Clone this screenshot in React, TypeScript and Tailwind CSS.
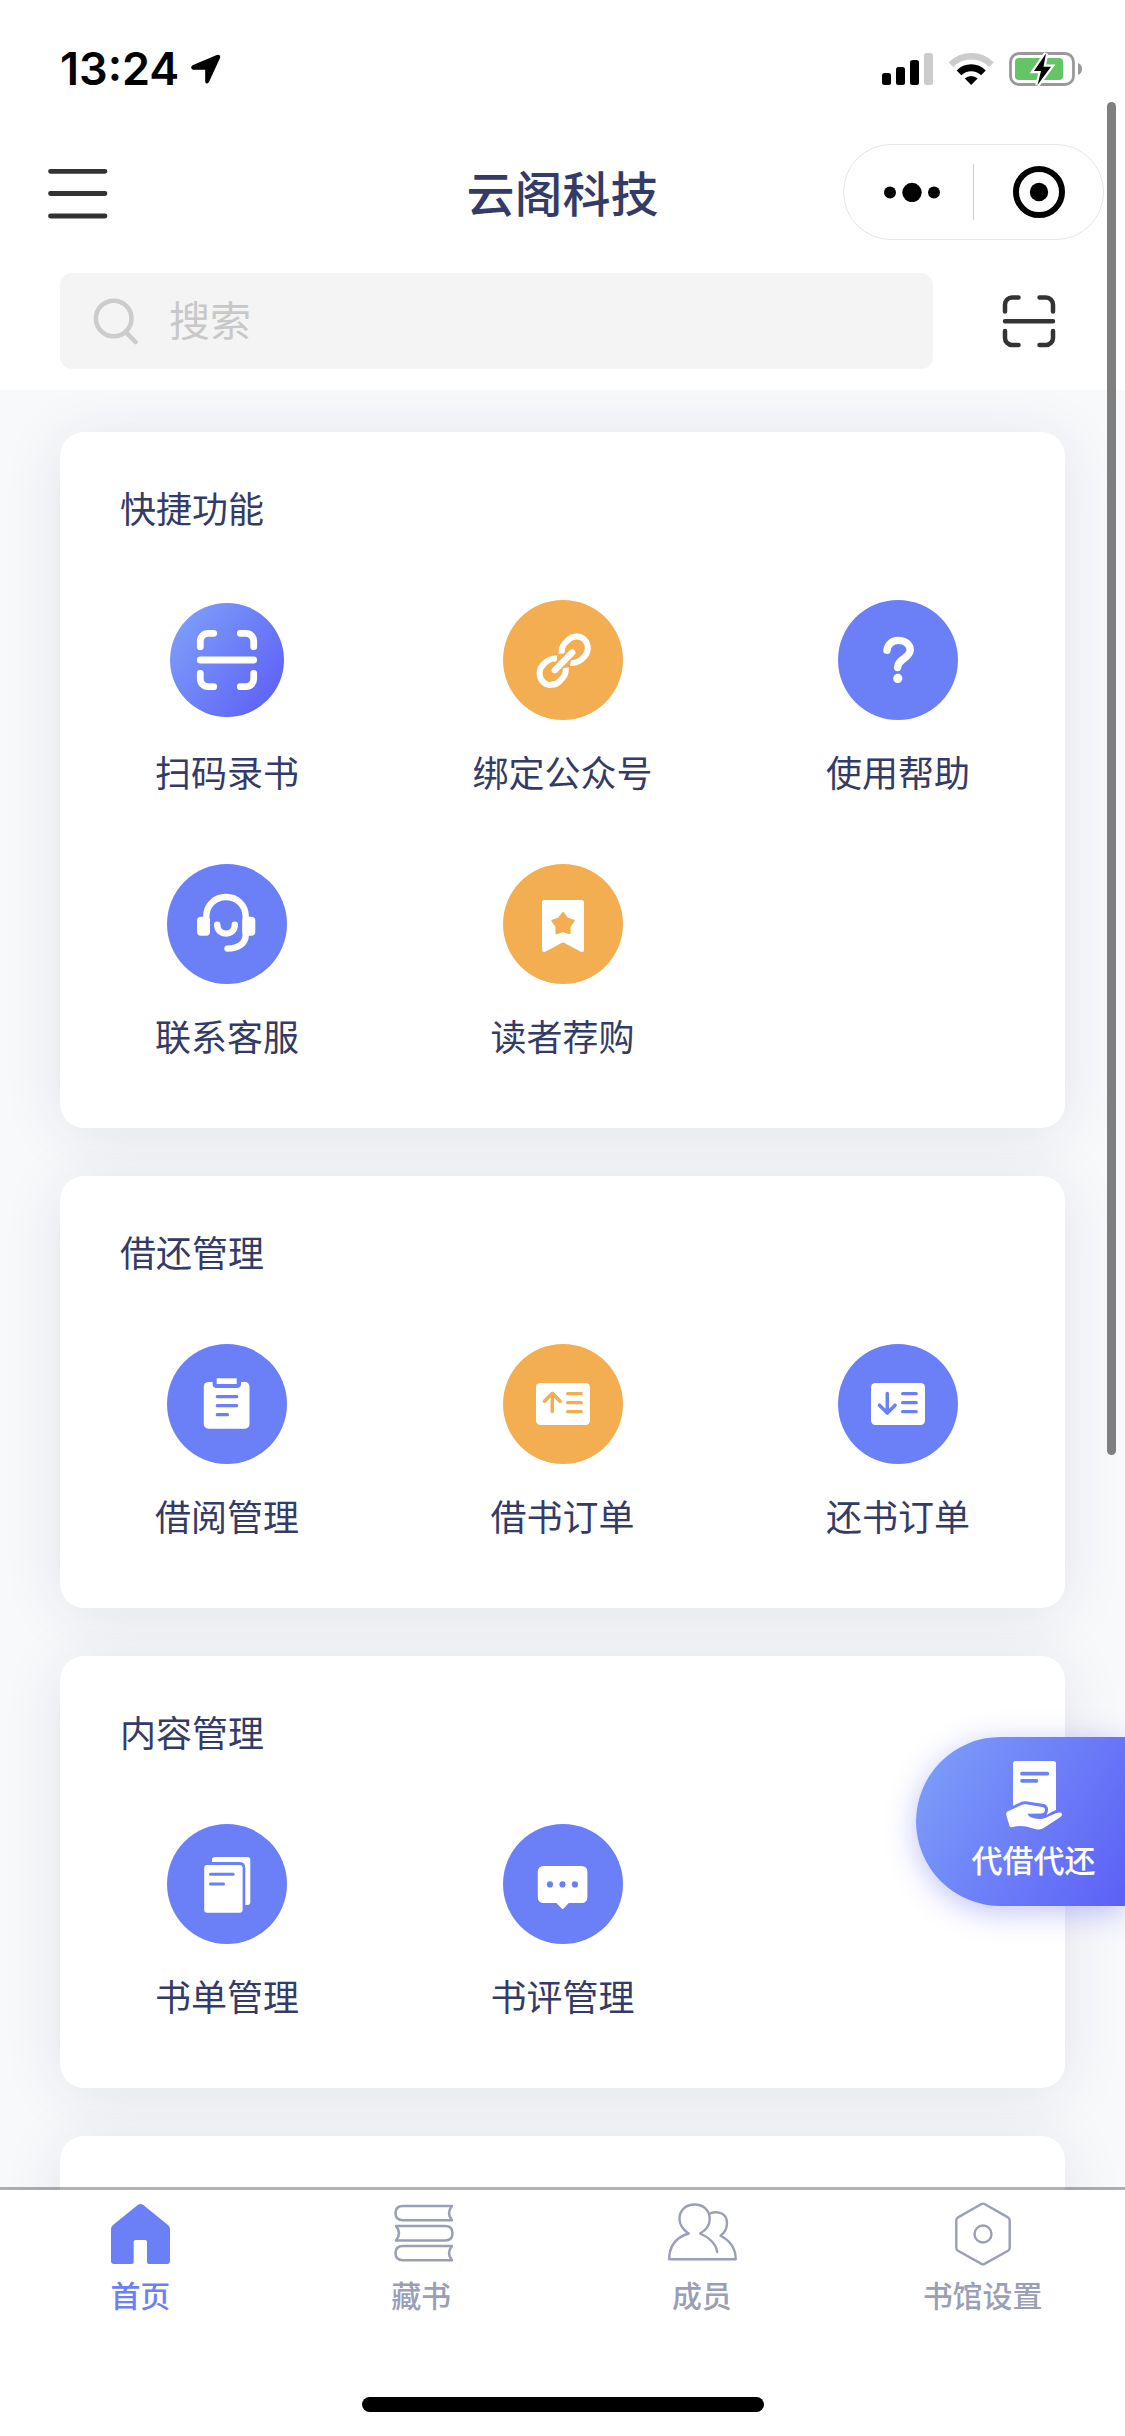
import type { ReactNode } from 'react';

const BLUE = '#6b80f7';
const ORANGE = '#f2ae50';

type Entry = { label: string; icon: ReactNode };
type Section = { title: string; items: Entry[] };

function Badge({ fill, children }: { fill: string; children: ReactNode }) {
  return (
    <svg className="size-[120px]" viewBox="0 0 120 120" fill="none">
      <circle cx="60" cy="60" r="60" fill={fill} />
      {children}
    </svg>
  );
}

function ScanBadge() {
  return (
    <svg className="size-[120px]" viewBox="0 0 120 120" fill="none">
      <defs>
        <linearGradient id="scan" x1="0.1" y1="0.2" x2="0.9" y2="0.8">
          <stop offset="0" stopColor="#7b9af9" />
          <stop offset="1" stopColor="#6065f7" />
        </linearGradient>
      </defs>
      <circle cx="60" cy="60" r="57" fill="url(#scan)" />
      <path
        d="M33.3 46.7V41a7.7 7.7 0 0 1 7.7-7.7h5.7M73.3 33.3H79a7.7 7.7 0 0 1 7.7 7.7v5.7M86.7 73.3V79a7.7 7.7 0 0 1-7.7 7.7h-5.7M46.7 86.7H41a7.7 7.7 0 0 1-7.7-7.7v-5.7M33.3 60h53.4"
        stroke="#fff"
        strokeWidth="6.8"
        strokeLinecap="round"
      />
    </svg>
  );
}

function LinkBadge() {
  const ring = 'M58.6 53.6C58 47.5 60.5 44.5 64 41C69 35.4 77 35.2 81.4 39.6C86 44.2 86 52 81 57C77.5 60.8 74 63.8 67.5 62.8';
  return (
    <Badge fill={ORANGE}>
      <g stroke="#fff" strokeWidth="6">
        <path d={ring} />
        <path d={ring} transform="rotate(180 60.7 60.7)" />
      </g>
      <path d="M51.8 70.2L69.2 52.6" stroke={ORANGE} strokeWidth="10" />
      <path d="M51.8 70.2L69.2 52.6" stroke="#fff" strokeWidth="6.4" strokeLinecap="round" />
    </Badge>
  );
}

function HelpBadge() {
  return (
    <Badge fill={BLUE}>
      <path
        d="M49 50.2C50 43.6 54.6 40.4 60.5 40.4C67 40.4 72.2 44.4 72.2 50C72.2 58 59.6 59 59.6 67.5"
        stroke="#fff"
        strokeWidth="7.4"
        strokeLinecap="round"
      />
      <circle cx="59.8" cy="78.4" r="4.6" fill="#fff" />
    </Badge>
  );
}

function ServiceBadge() {
  return (
    <Badge fill={BLUE}>
      <rect x="30" y="52.7" width="13" height="19" rx="4" fill="#fff" />
      <rect x="75.3" y="52.7" width="13" height="19" rx="4" fill="#fff" />
      <path
        d="M39.3 56V52.5C39.3 41 48 33 59 33C70 33 78.7 41 78.7 52.5V71C78.7 79 72 84.6 60.5 84.6"
        stroke="#fff"
        strokeWidth="6.4"
        strokeLinecap="round"
      />
      <path d="M50.2 60.8C50.2 72.6 67.8 72.6 67.8 60.8" stroke="#fff" strokeWidth="6.4" strokeLinecap="round" />
    </Badge>
  );
}

function BookmarkBadge() {
  return (
    <Badge fill={ORANGE}>
      <path d="M41.5 36h37a2.5 2.5 0 0 1 2.5 2.5v47.2q0 3-3.2 2L60 78.3L42.2 87.7q-3.2 1-3.2-2V38.5A2.5 2.5 0 0 1 41.5 36Z" fill="#fff" />
      <path
        d="M60 48.8L64 54.4L70.8 56.6L66.6 62.4V69.2L60 67L53.4 69.2V62.4L49.2 56.6L56 54.4Z"
        fill={ORANGE}
        stroke={ORANGE}
        strokeWidth="2"
        strokeLinejoin="round"
      />
    </Badge>
  );
}

function ClipboardBadge() {
  return (
    <Badge fill={BLUE}>
      <path
        d="M41 38h4.6v2a4 4 0 0 0 4 4H70a4 4 0 0 0 4-4v-2h4a4.5 4.5 0 0 1 4.5 4.5V80a4.5 4.5 0 0 1-4.5 4.7H41.3A4.5 4.5 0 0 1 36.8 80V42.5A4.5 4.5 0 0 1 41 38Z"
        fill="#fff"
      />
      <path d="M49.7 34.3h20V40h-20z" fill="#fff" />
      <path d="M50.3 52.7h19.4M50.3 61.7h19.4M50.3 70.7h10.2" stroke={BLUE} strokeWidth="3.3" strokeLinecap="round" />
    </Badge>
  );
}

function OrderBadge({ fill, arrow }: { fill: string; arrow: string }) {
  return (
    <Badge fill={fill}>
      <rect x="33" y="39" width="54" height="42" rx="4.5" fill="#fff" />
      <path d={arrow} stroke={fill} strokeWidth="3.5" strokeLinecap="round" strokeLinejoin="round" />
      <path d="M64.6 49.7h13.7M64.6 58.7h13.7M64.6 67.7h13.7" stroke={fill} strokeWidth="3.2" strokeLinecap="round" />
    </Badge>
  );
}

function BookListBadge() {
  return (
    <Badge fill={BLUE}>
      <rect x="37.2" y="41" width="38.4" height="47.7" rx="3" fill="#fff" />
      <path d="M45 38v-2q0-3 3-3h32.5q2.8 0 2.8 3v42q0 3-2.8 3h-2.2V44q0-6-5.5-6z" fill="#fff" />
      <path d="M43.5 50.3h22.6M43.5 60h13" stroke={BLUE} strokeWidth="3.1" strokeLinecap="round" />
    </Badge>
  );
}

function CommentBadge() {
  return (
    <Badge fill={BLUE}>
      <path
        d="M40.3 42h38.6a5.5 5.5 0 0 1 5.5 5.5v26a5.5 5.5 0 0 1-5.5 5.5H65.8l-5.2 5.6q-1 1-2 0L53.4 79H40.3a5.5 5.5 0 0 1-5.5-5.5v-26a5.5 5.5 0 0 1 5.5-5.5Z"
        fill="#fff"
      />
      <g fill={BLUE}>
        <circle cx="47" cy="60.4" r="3.1" />
        <circle cx="59.5" cy="60.4" r="3.1" />
        <circle cx="71.9" cy="60.4" r="3.1" />
      </g>
    </Badge>
  );
}

const sections: Section[] = [
  {
    title: '快捷功能',
    items: [
      { label: '扫码录书', icon: <ScanBadge /> },
      { label: '绑定公众号', icon: <LinkBadge /> },
      { label: '使用帮助', icon: <HelpBadge /> },
      { label: '联系客服', icon: <ServiceBadge /> },
      { label: '读者荐购', icon: <BookmarkBadge /> },
    ],
  },
  {
    title: '借还管理',
    items: [
      { label: '借阅管理', icon: <ClipboardBadge /> },
      { label: '借书订单', icon: <OrderBadge fill={ORANGE} arrow="M49.3 67.5V49.5M41.5 57.2L49.3 49.3L57.1 57.2" /> },
      { label: '还书订单', icon: <OrderBadge fill={BLUE} arrow="M49.3 49.5V69M41.5 61.2L49.3 69.1L57.1 61.2" /> },
    ],
  },
  {
    title: '内容管理',
    items: [
      { label: '书单管理', icon: <BookListBadge /> },
      { label: '书评管理', icon: <CommentBadge /> },
    ],
  },
];

function StatusBar() {
  return (
    <div className="flex h-[138px] items-start pt-[52px] pr-[43px] pl-[60px]">
      <span className="w-[130px] font-['Inter'] text-[45px] leading-[34px] font-semibold text-black">13:24</span>
      <svg className="mt-0.5 h-[30px] w-[31px]" viewBox="0 0 31 30">
        <path d="M2.5 11.2L26.8 0.9Q31 0 30 4L19 28Q16.5 31 15.2 28V15.7H3Q-0.5 14 2.5 11.2Z" />
      </svg>
      <svg className="ml-auto h-[34px] w-[51px]" viewBox="0 0 51 34">
        <rect y="21" width="9" height="12" rx="2.5" />
        <rect x="14" y="15" width="9" height="18" rx="2.5" />
        <rect x="28" y="8" width="9" height="25" rx="2.5" />
        <rect x="42" y="1" width="9" height="32" rx="2.5" fill="#ccc" />
      </svg>
      <svg className="ml-4 h-[34px] w-[45px]" viewBox="0 0 45 34" fill="none">
        <path d="M1.9 12.7A28.7 28.7 0 0 1 42.5 12.7" stroke="#ccc" strokeWidth="6.6" />
        <path d="M10 20.8A17.3 17.3 0 0 1 34.4 20.8" stroke="#000" strokeWidth="6.8" />
        <path d="M22.2 33L15.8 26.6A9 9 0 0 1 28.6 26.6Z" fill="#000" />
      </svg>
      <svg className="ml-[15px] h-[34px] w-[73px]" viewBox="0 0 73 34" fill="none">
        <rect x="1.5" y="1.5" width="63" height="31" rx="8.5" stroke="#999" strokeWidth="2.8" />
        <rect x="6" y="6" width="48" height="22" rx="4" fill="#65c466" />
        <path d="M69 11q4 1.5 4 6t-4 6z" fill="#999" />
        <path
          d="M37 1.5L25 19H32L28.5 33L42 14.7H34.5Z"
          fill="#000"
          stroke="#fff"
          strokeWidth="4.5"
          paintOrder="stroke"
        />
      </svg>
    </div>
  );
}

function TitleBar() {
  return (
    <div className="grid h-[110px] grid-cols-[1fr_auto_1fr] items-center">
      <svg className="ml-12 h-[51px] w-[60px]" viewBox="0 0 60 51">
        <path d="M2.5 3.3h54.5M2.5 25.5h54.5M2.5 48h54.5" stroke="#333" strokeWidth="4.8" strokeLinecap="round" />
      </svg>
      <h1 className="pb-[5px] text-[48px] leading-none font-medium text-[#343b66]">云阁科技</h1>
      <div className="mr-[21px] mb-0.5 flex h-24 w-[261px] items-center justify-self-end rounded-full border border-[#e6e6e6]">
        <svg className="h-5 w-[129px]" viewBox="0 0 129 20">
          <circle cx="46" cy="10.500" r="6" />
          <circle cx="68" cy="10.500" r="9.700" />
          <circle cx="90" cy="10.500" r="6" />
        </svg>
        <div className="h-14 w-px bg-[#ccc]" />
        <svg className="ml-[39px] size-[52px]" viewBox="0 0 52 52">
          <circle cx="26" cy="26" r="23" fill="none" stroke="#000" strokeWidth="6" />
          <circle cx="26" cy="26" r="9.200" />
        </svg>
      </div>
    </div>
  );
}

function SearchRow() {
  return (
    <div className="flex items-center pt-[25px] pb-[21px] pl-[60px]">
      <div className="flex h-24 w-[873px] items-center rounded-xl bg-[#f4f4f4] pl-[33px]">
        <svg className="h-12 w-[47px]" viewBox="0 0 47 48" fill="none" stroke="#ccc" strokeWidth="4.6">
          <circle cx="20.7" cy="21.5" r="17.8" />
          <path d="M32.500 34.800L42.500 45" strokeLinecap="round" />
        </svg>
        <span className="ml-[29px] pb-[5px] text-[41px] leading-none text-[#c8c8c8]">搜索</span>
      </div>
      <svg className="ml-[69px] size-[54px]" viewBox="0 0 54 54" fill="none">
        <path
          d="M3 17.5V10.5A7 7 0 0 1 10 3.500H16.500M37.500 3.500H44A7 7 0 0 1 51 10.500V17.500M51 37V44A7 7 0 0 1 44 51H37.500M16.500 51H10A7 7 0 0 1 3 44V37M3 27.300H51"
          stroke="#333"
          strokeWidth="4.5"
          strokeLinecap="round"
        />
      </svg>
    </div>
  );
}

function SectionCard({ title, items }: Section) {
  return (
    <section className="rounded-3xl bg-white shadow-[0_6px_60px_rgba(40,42,70,0.1)]">
      <h2 className="h-[168px] pt-[50px] pl-[60px] text-[36px] leading-[50px] text-[#343b66]">{title}</h2>
      <div className="grid grid-cols-[334px_337px_334px]">
        {items.map((item) => (
          <div key={item.label} className="flex h-[264px] flex-col items-center">
            {item.icon}
            <span className="mt-[26px] text-[36px] leading-[50px] text-[#343b66]">{item.label}</span>
          </div>
        ))}
      </div>
    </section>
  );
}

function LendButton() {
  return (
    <div className="absolute top-[1737px] right-0 flex h-[169px] w-[209px] flex-col items-center rounded-l-full bg-linear-[120deg] from-[#7b9af9] from-10% to-[#5c60f6] pt-6 pl-[26px] shadow-[0_6px_30px_rgba(95,105,247,0.4)]">
      <svg className="h-[69px] w-14" viewBox="0 0 56 69" fill="#fff">
        <path d="M9.5 0H47.5Q50 0 50 2.500V49Q46 50.500 40.500 54Q43 49 41.500 46Q40 43 36.500 42.800L20 40.300Q17 40 14 41.500L7 44.800V2.500Q7 0 9.500 0Z" />
        <path d="M0 53Q0 51.500 1.500 50.500L14.500 44.500Q17.500 43 20 43.300L36 46Q39.500 46.500 39 49.500Q38.500 52.500 35 52.500L21.500 52.700Q22.500 56 28 57.300Q35 59 39 57L50 52.300Q55.500 50.500 56 53Q56.300 55 53 57L38 66.800Q34.500 69.500 30 68.200L20 65.500Q13 64 6 66.200Q4 66.500 3.500 65Z" />
        <path d="M16 12.700h25.300M16 19.800h14.500" fill="none" stroke="#6c82f7" strokeWidth="3.700" strokeLinecap="round" />
      </svg>
      <span className="mt-[9px] text-[31px] leading-[40px] font-medium whitespace-nowrap text-white">代借代还</span>
    </div>
  );
}

function HomeIcon() {
  return (
    <svg className="h-16 w-[59px]" viewBox="0 0 59 64" fill="#6b80f7">
      <path d="M27 2.8Q29.5 1 32 2.8L57 23Q59 24.5 59 27V59Q59 62 56 62H38Q36 62 36 60V40Q36 38 34 38H24.7Q22.7 38 22.7 40V60Q22.7 62 20.7 62H3Q0 62 0 59V27Q0 24.5 2 23Z" />
    </svg>
  );
}

function BooksIcon() {
  const book = 'M58 1.5H9Q1.5 1.5 1.5 8.6T9 15.8H58Q52 8.6 58 1.5Z';
  return (
    <svg className="ml-1.5 h-16 w-[60px]" viewBox="0 0 60 64" fill="none" stroke="#9a9fb6" strokeWidth="2.5" strokeLinejoin="round">
      <path d={book} transform="translate(0 2.5)" />
      <path d={book} transform="translate(60 22.6) scale(-1 1)" />
      <path d={book} transform="translate(0 42.5)" />
    </svg>
  );
}

function MembersIcon() {
  return (
    <svg className="ml-0.5 h-16 w-[69px]" viewBox="0 0 69 64" fill="none" stroke="#9a9fb6" strokeWidth="2.4" strokeLinecap="round" strokeLinejoin="round">
      <path d="M20.500 31.500C14 27 11.500 21.500 11.500 17C11.500 8 18 2.500 26.700 2.500C35 2.500 41.700 8 41.700 17C41.700 22.500 38.500 28 32 31.500C41 35 48.500 42.500 49.200 50" />
      <path d="M20.500 31.500C8 35.500 1.200 44.500 1.200 57.200H67.700C67.700 47 62 38.500 52.500 33.700C57 30.500 59 26 59 21C59 12 50.500 8 42 11.500" />
    </svg>
  );
}

function SettingsIcon() {
  return (
    <svg className="h-16 w-[60px]" viewBox="0 0 60 64" fill="none" stroke="#9a9fb6" strokeWidth="2.4" strokeLinejoin="round">
      <path d="M28.5 2Q30 1.200 31.500 2L55 15.400Q56.700 16.500 56.700 18.200V46Q56.700 47.800 55 48.800L31.500 61.900Q30 62.700 28.500 61.900L5 48.800Q3.300 47.800 3.300 46V18.200Q3.300 16.500 5 15.400Z" />
      <circle cx="30" cy="32" r="8.5" />
    </svg>
  );
}

const tabs = [
  { label: '首页', icon: <HomeIcon />, active: true },
  { label: '藏书', icon: <BooksIcon /> },
  { label: '成员', icon: <MembersIcon /> },
  { label: '书馆设置', icon: <SettingsIcon /> },
];

export default function App() {
  return (
    <div className="relative flex h-[2436px] w-[1125px] flex-col overflow-hidden bg-white font-['Noto_Sans_CJK_SC',sans-serif]">
      <header>
        <StatusBar />
        <TitleBar />
        <SearchRow />
      </header>

      <main className="relative flex flex-1 flex-col gap-12 overflow-hidden bg-[#f8f9fb] px-[60px] pt-[42px]">
        {sections.map((section) => (
          <SectionCard key={section.title} {...section} />
        ))}
        {/* next card, cut off by the tab bar */}
        <section className="h-[400px] shrink-0 rounded-3xl bg-white shadow-[0_6px_60px_rgba(40,42,70,0.1)]" />
        <div className="absolute bottom-0 left-0 h-[3px] w-full bg-black/30" />
      </main>

      <footer className="flex h-[246px] flex-col items-center bg-white">
        <nav className="grid w-full grid-cols-4 pt-3 pr-0.5">
          {tabs.map((tab) => (
            <div key={tab.label} className="flex flex-col items-center">
              {tab.icon}
              <span className={`mt-2 text-[30px] leading-[40px] font-medium ${tab.active ? 'text-[#6b80f7]' : 'text-[#9a9fb6]'}`}>
                {tab.label}
              </span>
            </div>
          ))}
        </nav>
        <div className="mt-auto mb-6 h-[15px] w-[402px] rounded-full bg-black" />
      </footer>

      <LendButton />
      <div className="absolute top-[102px] right-[9px] h-[1353px] w-[9px] rounded-full bg-[#7f7f7f]" />
    </div>
  );
}
